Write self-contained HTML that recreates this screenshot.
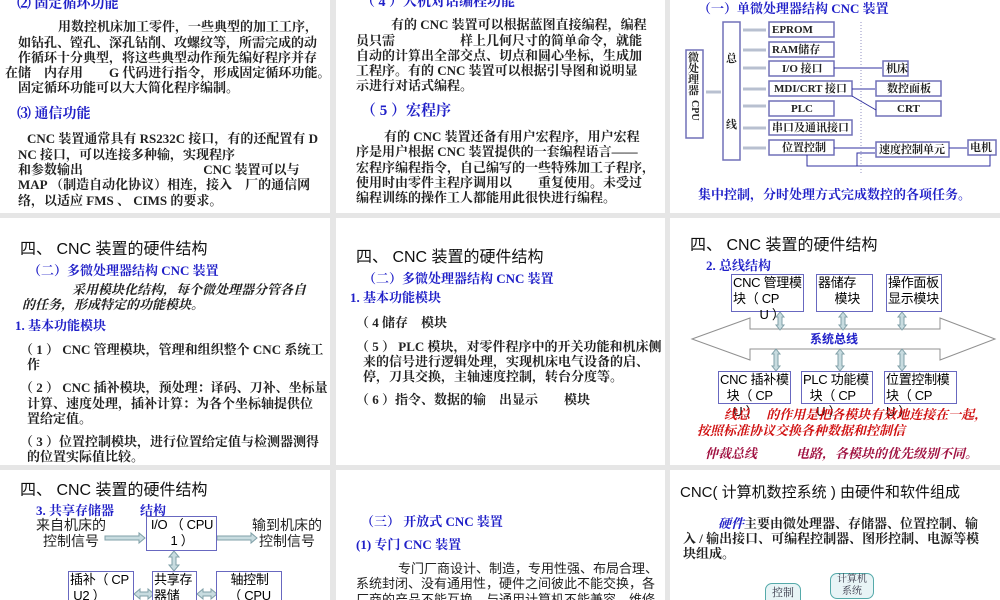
<!DOCTYPE html>
<html><head><meta charset="utf-8"><style>
*{margin:0;padding:0;box-sizing:border-box}
body{width:1000px;height:600px;background:#e6e6e6;position:relative;overflow:hidden;font-family:"Liberation Serif","Noto Serif CJK SC",serif}
.p{position:absolute;background:#fff;overflow:hidden}
.t{position:absolute;white-space:nowrap;font-size:13px;font-weight:bold;color:#222;line-height:16px}
.b{color:#2020c8}
.s{font-family:"Liberation Sans","Noto Sans CJK SC",sans-serif;font-weight:normal}
.h{font-family:"Liberation Sans","Noto Sans CJK SC",sans-serif;font-size:16px;font-weight:normal;color:#111}
.i{font-style:italic}
.r{color:#d01010}
.sb{position:absolute;border:1.5px solid #6868c0;background:#fff;font-family:"Liberation Sans","Noto Sans CJK SC",sans-serif;font-size:13px;line-height:16px;text-align:left;padding-left:1px;overflow:visible;white-space:nowrap;letter-spacing:-0.3px}
</style></head><body>

<!-- Panel 1 -->
<div class="p" style="left:0;top:0;width:330px;height:213px">
<div class="t b" style="left:17px;top:-3px;font-size:14px">⑵ 固定循环功能</div>
<div class="t" style="left:58px;top:19px">用数控机床加工零件，一些典型的加工工序，</div>
<div class="t" style="left:18px;top:35px">如钻孔、镗孔、深孔钻削、攻螺纹等，所需完成的动</div>
<div class="t" style="left:18px;top:50px">作循环十分典型，将这些典型动作预先编好程序并存</div>
<div class="t" style="left:5px;top:65px">在储　内存用　　G 代码进行指令，形成固定循环功能。</div>
<div class="t" style="left:18px;top:80px">固定循环功能可以大大简化程序编制。</div>
<div class="t b" style="left:17px;top:107px;font-size:14px">⑶ 通信功能</div>
<div class="t" style="left:27px;top:131px">CNC 装置通常具有 RS232C 接口，有的还配置有 D</div>
<div class="t" style="left:18px;top:147px">NC 接口，可以连接多种输，实现程序</div>
<div class="t" style="left:18px;top:162px">和参数输出　　　　　　　　　 CNC 装置可以与</div>
<div class="t" style="left:18px;top:177px">MAP （制造自动化协议）相连，接入　厂的通信网</div>
<div class="t" style="left:18px;top:193px">络，以适应 FMS 、 CIMS 的要求。</div>
</div>

<!-- Panel 2 -->
<div class="p" style="left:336px;top:0;width:329px;height:213px">
<div class="t b" style="left:25px;top:-5px;font-size:14px">（ 4 ）人机对话编程功能</div>
<div class="t" style="left:55px;top:17px">有的 CNC 装置可以根据蓝图直接编程，编程</div>
<div class="t" style="left:20px;top:33px">员只需　　　　　样上几何尺寸的简单命令，就能</div>
<div class="t" style="left:20px;top:48px">自动的计算出全部交点、切点和圆心坐标，生成加</div>
<div class="t" style="left:20px;top:63px">工程序。有的 CNC 装置可以根据引导图和说明显</div>
<div class="t" style="left:20px;top:78px">示进行对话式编程。</div>
<div class="t b" style="left:25px;top:103px;font-size:15px">（ 5 ）宏程序</div>
<div class="t" style="left:48px;top:129px">有的 CNC 装置还备有用户宏程序，用户宏程</div>
<div class="t" style="left:20px;top:144px">序是用户根据 CNC 装置提供的一套编程语言——</div>
<div class="t" style="left:20px;top:160px">宏程序编程指令，自己编写的一些特殊加工子程序，</div>
<div class="t" style="left:20px;top:175px">使用时由零件主程序调用以　　重复使用。未受过</div>
<div class="t" style="left:20px;top:190px">编程训练的操作工人都能用此很快进行编程。</div>
</div>

<!-- Panel 3 -->
<div class="p" style="left:670px;top:0;width:330px;height:213px">
<div class="t b" style="left:28px;top:1px">（一）单微处理器结构 CNC 装置</div>
<svg style="position:absolute;left:0;top:0" width="330" height="213">
<g fill="none" stroke="#7070b8" stroke-width="1.5">
<rect x="16" y="50" width="17" height="88"/>
<rect x="53" y="22" width="17" height="138"/>
<rect x="99" y="22" width="65" height="15"/>
<rect x="99" y="42" width="65" height="15"/>
<rect x="99" y="61" width="65" height="15"/>
<rect x="99" y="81" width="83" height="15"/>
<rect x="99" y="101" width="65" height="15"/>
<rect x="99" y="120" width="83" height="15"/>
<rect x="99" y="140" width="65" height="15"/>
<rect x="213" y="61" width="25" height="15"/>
<rect x="206" y="81" width="65" height="15"/>
<rect x="206" y="101" width="65" height="15"/>
<rect x="206" y="142" width="73" height="15"/>
<rect x="298" y="140" width="28" height="15"/>
</g>
<g stroke="#b8c0d0" stroke-width="3" fill="none">
<line x1="36" y1="92" x2="51" y2="92"/>
<line x1="73" y1="30" x2="96" y2="30"/><line x1="73" y1="50" x2="96" y2="50"/>
<line x1="73" y1="68" x2="96" y2="68"/><line x1="73" y1="89" x2="96" y2="89"/>
<line x1="73" y1="106" x2="96" y2="106"/><line x1="73" y1="128" x2="96" y2="128"/>
<line x1="73" y1="148" x2="96" y2="148"/>
</g>
<g stroke="#3030a0" stroke-width="1" fill="none">
<line x1="164" y1="68" x2="212" y2="68"/>
<line x1="182" y1="89" x2="205" y2="89"/>
<line x1="182" y1="96" x2="206" y2="110"/>
<line x1="164" y1="148" x2="205" y2="148"/>
<line x1="279" y1="148" x2="297" y2="148"/>
<polyline points="137,155 137,166 320,166 320,155"/>
<polyline points="187,166 187,153 205,153"/>
<line x1="191" y1="22" x2="191" y2="175" stroke-dasharray="1,2" stroke="#9090c0"/>
</g>
</svg>
<div class="t" style="left:18px;top:53px;width:14px;white-space:normal;font-size:11px;line-height:11px">微处理器</div>
<div class="t" style="top:100px;font-size:10px;transform:rotate(90deg);transform-origin:left top;left:32px">CPU</div>
<div class="t" style="left:56px;top:51px;font-size:11px">总</div>
<div class="t" style="left:56px;top:117px;font-size:11px">线</div>
<div class="t" style="left:102px;top:22px;font-size:11px">EPROM</div>
<div class="t" style="left:102px;top:42px;font-size:11px">RAM储存</div>
<div class="t" style="left:112px;top:61px;font-size:11px">I/O 接口</div>
<div class="t" style="left:104px;top:81px;font-size:11px">MDI/CRT 接口</div>
<div class="t" style="left:121px;top:101px;font-size:11px">PLC</div>
<div class="t" style="left:102px;top:120px;font-size:11px">串口及通讯接口</div>
<div class="t" style="left:112px;top:140px;font-size:11px">位置控制</div>
<div class="t" style="left:216px;top:61px;font-size:11px">机床</div>
<div class="t" style="left:217px;top:81px;font-size:11px">数控面板</div>
<div class="t" style="left:227px;top:101px;font-size:11px">CRT</div>
<div class="t" style="left:209px;top:142px;font-size:11px">速度控制单元</div>
<div class="t" style="left:300px;top:140px;font-size:11px">电机</div>
<div class="t b" style="left:28px;top:187px">集中控制，分时处理方式完成数控的各项任务。</div>
</div>

<!-- Panel 4 -->
<div class="p" style="left:0;top:218px;width:330px;height:247px">
<div class="t h" style="left:20px;top:24px">四、 CNC 装置的硬件结构</div>
<div class="t b" style="left:28px;top:45px">（二）多微处理器结构 CNC 装置</div>
<div class="t i" style="left:72px;top:64px">采用模块化结构，每个微处理器分管各自</div>
<div class="t i" style="left:22px;top:79px">的任务，形成特定的功能模块。</div>
<div class="t b" style="left:15px;top:100px">1. 基本功能模块</div>
<div class="t" style="left:20px;top:124px">（ 1 ） CNC 管理模块，管理和组织整个 CNC 系统工</div>
<div class="t" style="left:27px;top:139px">作</div>
<div class="t" style="left:20px;top:162px">（ 2 ） CNC 插补模块，预处理：译码、刀补、坐标量</div>
<div class="t" style="left:27px;top:178px">计算、速度处理，插补计算：为各个坐标轴提供位</div>
<div class="t" style="left:27px;top:193px">置给定值。</div>
<div class="t" style="left:20px;top:216px">（ 3 ）位置控制模块，进行位置给定值与检测器测得</div>
<div class="t" style="left:27px;top:231px">的位置实际值比较。</div>
</div>

<!-- Panel 5 -->
<div class="p" style="left:336px;top:218px;width:329px;height:247px">
<div class="t h" style="left:20px;top:32px">四、 CNC 装置的硬件结构</div>
<div class="t b" style="left:27px;top:53px">（二）多微处理器结构 CNC 装置</div>
<div class="t b" style="left:14px;top:72px">1. 基本功能模块</div>
<div class="t" style="left:20px;top:97px">（ 4 储存　模块</div>
<div class="t" style="left:20px;top:121px">（ 5 ） PLC 模块，对零件程序中的开关功能和机床侧</div>
<div class="t" style="left:27px;top:136px">来的信号进行逻辑处理，实现机床电气设备的启、</div>
<div class="t" style="left:27px;top:151px">停，刀具交换，主轴速度控制，转台分度等。</div>
<div class="t" style="left:20px;top:174px">（ 6 ）指令、数据的输　出显示　　模块</div>
</div>

<!-- Panel 6 -->
<div class="p" style="left:670px;top:218px;width:330px;height:247px">
<div class="t h" style="left:20px;top:20px">四、 CNC 装置的硬件结构</div>
<div class="t b" style="left:36px;top:40px">2. 总线结构</div>
<svg style="position:absolute;left:0;top:0" width="330" height="247">
<polygon points="22,121 80,100 80,111 270,111 270,100 325,121 270,142 270,131 80,131 80,142" fill="#fff" stroke="#909090" stroke-width="1"/>
<g fill="#c8dce0" stroke="#80a0a8" stroke-width="1">
<path d="M110 112l-4-5h2v-8h-2l4-5 4 5h-2v8h2z"/>
<path d="M173 112l-4-5h2v-8h-2l4-5 4 5h-2v8h2z"/>
<path d="M232 112l-4-5h2v-8h-2l4-5 4 5h-2v8h2z"/>
<path d="M106 153l-4-5h2v-12h-2l4-5 4 5h-2v12h2z"/>
<path d="M170 153l-4-5h2v-12h-2l4-5 4 5h-2v12h2z"/>
<path d="M232 153l-4-5h2v-12h-2l4-5 4 5h-2v12h2z"/>
</g>
</svg>
<div class="sb" style="left:61px;top:56px;width:73px;height:38px">CNC 管理模<br>块（ CP<br>&nbsp;&nbsp;&nbsp;&nbsp;&nbsp;&nbsp;&nbsp;&nbsp;U ）</div>
<div class="sb" style="left:146px;top:56px;width:57px;height:38px">器储存<br>&nbsp;&nbsp;&nbsp;&nbsp;&nbsp;模块</div>
<div class="sb" style="left:216px;top:56px;width:56px;height:38px">操作面板<br>显示模块</div>
<div class="t b s" style="left:140px;top:113px;font-size:12px;font-weight:bold">系统总线</div>
<div class="sb" style="left:48px;top:153px;width:73px;height:33px">CNC 插补模<br>&nbsp;&nbsp;块（ CP<br>&nbsp;&nbsp;&nbsp;&nbsp;U ）</div>
<div class="sb" style="left:131px;top:153px;width:72px;height:33px">PLC 功能模<br>&nbsp;&nbsp;块（ CP<br>&nbsp;&nbsp;&nbsp;&nbsp;U ）</div>
<div class="sb" style="left:214px;top:153px;width:73px;height:33px">位置控制模<br>块（ CP<br>U ）</div>
<div class="t r i" style="left:54px;top:189px">线总 　的作用是把各模块有效地连接在一起，</div>
<div class="t r i" style="left:27px;top:205px">按照标准协议交换各种数据和控制信</div>
<div class="t i" style="left:35px;top:228px;color:#a01040">仲裁总线　　　电路，各模块的优先级别不同。</div>
</div>

<!-- Panel 7 -->
<div class="p" style="left:0;top:470px;width:330px;height:130px">
<div class="t h" style="left:20px;top:13px">四、 CNC 装置的硬件结构</div>
<div class="t b" style="left:36px;top:33px">3. 共享存储器　　结构</div>
<div class="t s" style="left:36px;top:47px;font-size:14px">来自机床的</div>
<div class="t s" style="left:43px;top:63px;font-size:14px">控制信号</div>
<div class="t s" style="left:252px;top:47px;font-size:14px">输到机床的</div>
<div class="t s" style="left:259px;top:63px;font-size:14px">控制信号</div>
<svg style="position:absolute;left:0;top:0" width="330" height="130">
<g fill="#c8dce0" stroke="#80a0a8" stroke-width="1">
<path d="M105 66h34v-3l6 5-6 5v-3h-34z"/>
<path d="M217 66h34v-3l6 5-6 5v-3h-34z"/>
<path d="M174 81l-5 6h3v8h-3l5 6 5-6h-3v-8h3z"/>
<path d="M134 124l6-5v3h8v-3l6 5-6 5v-3h-8v3z"/>
<path d="M197 124l6-5v3h8v-3l6 5-6 5v-3h-8v3z"/>
</g>
</svg>
<div class="sb" style="left:146px;top:46px;width:71px;height:35px;text-align:center">I/O （ CPU<br>1 ）</div>
<div class="sb" style="left:68px;top:101px;width:66px;height:40px">插补（ CP<br>&nbsp;U2 ）</div>
<div class="sb" style="left:152px;top:101px;width:45px;height:40px">共享存<br>器储</div>
<div class="sb" style="left:216px;top:101px;width:66px;height:40px;text-align:center">轴控制<br>（ CPU</div>
</div>

<!-- Panel 8 -->
<div class="p" style="left:336px;top:470px;width:329px;height:130px">
<div class="t b" style="left:25px;top:44px">（三） 开放式 CNC 装置</div>
<div class="t b" style="left:20px;top:67px">(1) 专门 CNC 装置</div>
<div class="t s" style="left:62px;top:91px">专门厂商设计、制造，专用性强、布局合理、</div>
<div class="t s" style="left:20px;top:106px">系统封闭、没有通用性，硬件之间彼此不能交换，各</div>
<div class="t s" style="left:20px;top:122px">厂商的产品不能互换，与通用计算机不能兼容，维修</div>
</div>

<!-- Panel 9 -->
<div class="p" style="left:670px;top:470px;width:330px;height:130px">
<div class="t h" style="left:10px;top:15px;font-size:15px">CNC( 计算机数控系统 ) 由硬件和软件组成</div>
<div class="t" style="left:48px;top:46px"><span class="b i">硬件</span>主要由微处理器、存储器、位置控制、输</div>
<div class="t" style="left:13px;top:61px">入 / 输出接口、可编程控制器、图形控制、电源等模</div>
<div class="t" style="left:13px;top:76px">块组成。</div>
<div style="position:absolute;left:95px;top:113px;width:36px;height:24px;border:1px solid #5aa;border-radius:7px;background:#e8f4f6;font-size:11px;text-align:center;color:#334">控制</div>
<div style="position:absolute;left:160px;top:103px;width:44px;height:26px;border:1px solid #5aa;border-radius:7px;background:#e8f4f6;font-size:10px;line-height:12px;text-align:center;color:#334">计算机<br>系统</div>
</div>

</body></html>
